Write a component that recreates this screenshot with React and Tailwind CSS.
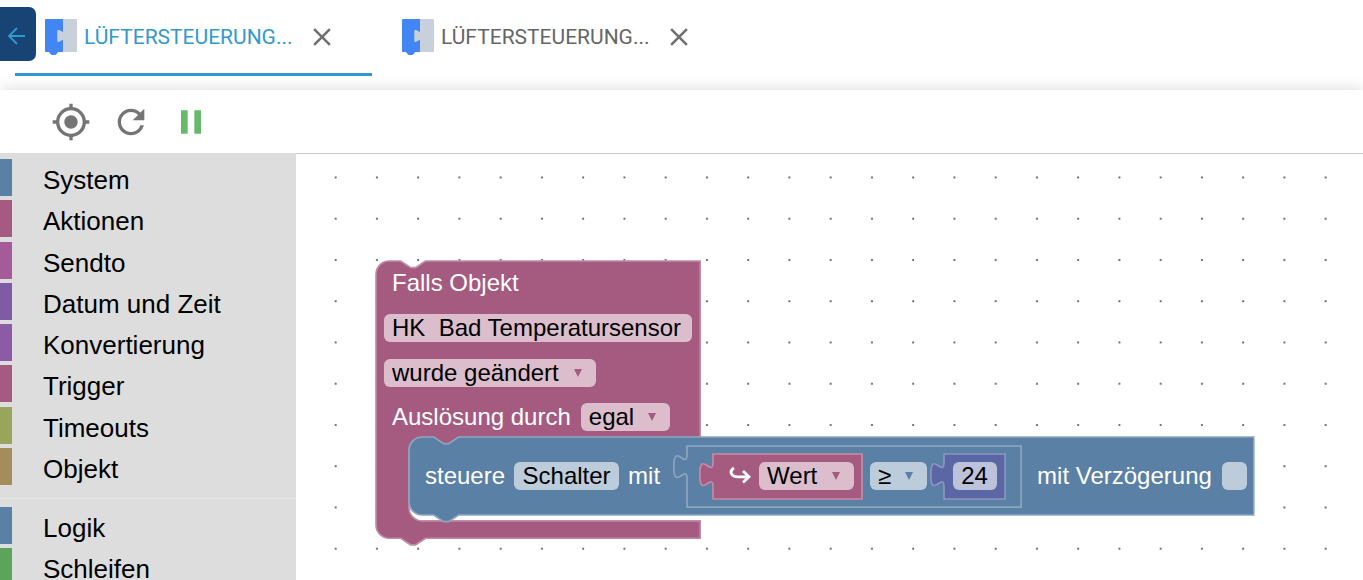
import { MdClose, MdMyLocation, MdPause, MdRefresh } from "react-icons/md";

const categories = [
  { name: "System", color: "bg-[#5b80a5]" },
  { name: "Aktionen", color: "bg-[#a55b80]" },
  { name: "Sendto", color: "bg-[#a55b99]" },
  { name: "Datum und Zeit", color: "bg-[#805ba5]" },
  { name: "Konvertierung", color: "bg-[#8c5ba5]" },
  { name: "Trigger", color: "bg-[#a55b80]" },
  { name: "Timeouts", color: "bg-[#99a55b]" },
  { name: "Objekt", color: "bg-[#a58c5b]" },
];

const basics = [
  { name: "Logik", color: "bg-[#5b80a5]" },
  { name: "Schleifen", color: "bg-[#5ba55b]" },
];

function BlocklyIcon() {
  return (
    <svg width="32" height="36" viewBox="0 0 32 36" className="shrink-0" aria-hidden="true">
      <path d="M11 8H17V0H31a1 1 0 0 1 1 1V32a1 1 0 0 1-1 1H17V25H11Z" fill="#c8d0dc" />
      <path
        d="M1 0H18V13L14 11.1Q12.3 10.5 12.3 12V22Q12.3 23.500 14 22.800L18 20.700V33H13.600Q12.800 33.300 11.800 34.800Q10.800 36 9.600 36H7.600Q6.300 36 5.300 34.800Q4.300 33.300 3.500 33H1a1 1 0 0 1-1-1V1a1 1 0 0 1 1-1Z"
        fill="#4285f4"
      />
    </svg>
  );
}

function Tab({ active }) {
  return (
    <div
      className={
        active
          ? "flex h-[76px] w-[357px] items-center border-b-[3px] border-[#3399cc] pl-[30px] text-[#3399cc]"
          : "flex h-[76px] w-[357px] items-center border-b-[3px] border-transparent pl-[30px] text-[#666666]"
      }
    >
      <button type="button" role="tab" aria-selected={active} className="flex items-center gap-[7px]">
        <BlocklyIcon />
        <span className="w-[209px] text-left font-[Roboto,sans-serif] text-[21px] leading-7 whitespace-nowrap">
          LÜFTERSTEUERUNG...
        </span>
      </button>
      <button type="button" aria-label="Tab schließen" className="ml-[14px] text-[#6f6f6f]">
        <MdClose size={30} />
      </button>
    </div>
  );
}

function Category({ name, color }) {
  return (
    <li className="flex-1">
      <button type="button" className="flex h-[41px] w-full gap-[31px] text-left">
        <span className={`h-[37px] w-3 shrink-0 ${color}`} />
        <span className="pt-[3px] text-[26px] leading-[37px]">{name}</span>
      </button>
    </li>
  );
}

function Outline({ d, fill, stroke }) {
  return (
    <svg className="absolute inset-0 size-full overflow-visible" aria-hidden="true">
      <path d={d} transform="scale(1.65)" fill={fill} stroke={stroke} strokeWidth="1" />
    </svg>
  );
}

function Dropdown({ label, value, width, field, arrow }) {
  return (
    <span className={`relative flex h-7 items-center ${width}`}>
      <select
        aria-label={label}
        defaultValue={value}
        className={`h-7 w-full appearance-none rounded-md pl-2 text-[24px] leading-7 text-black ${field}`}
      >
        <option>{value}</option>
      </select>
      <svg
        width="8"
        height="8"
        viewBox="0 0 8 8"
        className={`pointer-events-none absolute right-[14px] ${arrow}`}
        aria-hidden="true"
      >
        <path d="M0 0H8L4 8Z" fill="currentColor" />
      </svg>
    </span>
  );
}

const ROSE_FIELD = "bg-[#dbbdcc]";
const BLUE_FIELD = "bg-[#bdccdb]";

function TriggerBlock() {
  return (
    <div className="absolute top-[107px] left-[80px] h-[278px] w-[325px]">
      <Outline
        fill="#a55b80"
        stroke="#c08ca6"
        d="M0 8A8 8 0 0 1 8 0H15l6 4h3l6-4H196.500V107H50l-6 4h-3l-6-4h-7a8 8 0 0 0-8 8v34.500a8 8 0 0 0 8 8H196.500v10.500H30l-6 4h-3l-6-4H8a8 8 0 0 1-8-8Z"
      />
      <div className="relative flex flex-col pl-2">
        <div className="flex h-11 items-center pl-2">Falls Objekt</div>
        <div className="flex h-[45px] items-center">
          <button type="button" className={`h-7 w-[308px] rounded-md pl-2 text-left leading-7 whitespace-pre text-black ${ROSE_FIELD}`}>
            {"HK  Bad Temperatursensor"}
          </button>
        </div>
        <div className="flex h-[45px] items-center">
          <Dropdown label="Bedingung" value="wurde geändert" width="w-[212px]" field={ROSE_FIELD} arrow="text-[#a55b80]" />
        </div>
        <div className="flex h-11 items-center gap-[10px] pl-2">
          Auslösung durch
          <Dropdown label="Auslösung durch" value="egal" width="w-[89px]" field={ROSE_FIELD} arrow="text-[#a55b80]" />
        </div>
      </div>
    </div>
  );
}

function ValueBlock() {
  return (
    <div className="relative flex h-[45px] w-[149px] items-center gap-2 pl-4">
      <Outline
        fill="#a55b80"
        stroke="#c98ba3"
        d="M0 0H90.300V27.300H0V20C0 10-8 28-8 12.500S0 15 0 5Z"
      />
      <svg width="22" height="20" viewBox="0 0 22 20" className="relative" aria-hidden="true">
        <path
          d="M5 2C-.5 5.500 2.300 10.800 9 10.800H19.500M14 5L20 10.800L14 16.500"
          fill="none"
          stroke="#fff"
          strokeWidth="2.800"
        />
      </svg>
      <Dropdown label="Trigger-Wert" value="Wert" width="w-[95px]" field={ROSE_FIELD} arrow="text-[#a55b80]" />
    </div>
  );
}

function NumberBlock() {
  return (
    <div className="relative flex h-[45px] w-[61px] items-center justify-center">
      <Outline
        fill="#5b67a5"
        stroke="#8c95c0"
        d="M0 0H37V27.300H0V20C0 10-8 28-8 12.500S0 15 0 5Z"
      />
      <input
        aria-label="Vergleichswert"
        defaultValue="24"
        className="relative h-7 w-[44px] rounded-md bg-[#bdc2db] text-center text-[24px] leading-7 text-black"
      />
    </div>
  );
}

function CompareBlock() {
  return (
    <div className="relative ml-[18px] flex h-[61px] w-[334px] items-center pl-[26px]">
      <Outline
        fill="none"
        stroke="#8ca6c0"
        d="M0 0H202.500V37H0V20C0 10-8 28-8 12.500S0 15 0 5Z"
      />
      <ValueBlock />
      <div className="ml-2">
        <Dropdown label="Vergleich" value="≥" width="w-[57px]" field={BLUE_FIELD} arrow="text-[#5b80a5]" />
      </div>
      <div className="ml-[17px]">
        <NumberBlock />
      </div>
    </div>
  );
}

function ControlBlock() {
  return (
    <div className="absolute top-[283px] left-[113px] h-[78px] w-[845px]">
      <Outline
        fill="#5b80a5"
        stroke="#8ca6c0"
        d="M0 8A8 8 0 0 1 8 0H15l6 4h3l6-4H512V47.300H30l-6 4h-3l-6-4H8a8 8 0 0 1-8-8Z"
      />
      <div className="relative flex h-full items-center gap-[9px] pl-4 whitespace-nowrap">
        <span>steuere</span>
        <button type="button" className={`h-7 w-[105px] rounded-md text-center leading-7 text-black ${BLUE_FIELD}`}>
          Schalter
        </button>
        <span>mit</span>
        <CompareBlock />
        <label className="ml-[7px] flex items-center gap-[10px]">
          mit Verzögerung
          <input type="checkbox" className={`h-7 w-[25px] appearance-none rounded-md ${BLUE_FIELD}`} />
        </label>
      </div>
    </div>
  );
}

export default function App() {
  return (
    <div className="flex h-screen flex-col overflow-hidden bg-white font-['Liberation_Sans',Arial,sans-serif] text-black">
      <header className="flex h-[90px] shrink-0 items-start">
        <button
          type="button"
          aria-label="Zurück"
          className="mt-[7px] flex h-[54px] w-9 items-center rounded-r-[7px] bg-[#174475] pt-[3px] pl-2"
        >
          <svg width="17" height="18" viewBox="0 0 17 18" aria-hidden="true">
            <path d="M17 9H1M9 1L1 9L9 17" fill="none" stroke="#3399cc" strokeWidth="1.800" />
          </svg>
        </button>
        <div role="tablist" className="-ml-[21px] flex">
          <Tab active />
          <Tab active={false} />
        </div>
      </header>

      <div className="flex h-16 shrink-0 items-center gap-5 bg-white pl-[51px] text-[#757575] shadow-[0_-1px_14px_rgba(0,0,0,0.14)]">
        <button type="button" aria-label="Block lokalisieren">
          <MdMyLocation size={40} />
        </button>
        <button type="button" aria-label="Neu starten">
          <MdRefresh size={40} />
        </button>
        <button type="button" aria-label="Pause" className="text-[#66bb6a]">
          <MdPause size={40} />
        </button>
      </div>

      <main className="-mt-px flex min-h-0 flex-1">
        <nav aria-label="Kategorien" className="relative w-[296px] shrink-0 overflow-hidden bg-[#dddddd] pt-[6px]">
          <ul className="flex h-[330px] flex-col">
            {categories.map((c) => (
              <Category key={c.name} {...c} />
            ))}
          </ul>
          <hr className="mt-[9px] mb-2 border-t border-[#e5e5e5]" />
          <ul className="flex h-[82px] flex-col">
            {basics.map((c) => (
              <Category key={c.name} {...c} />
            ))}
          </ul>
        </nav>
        <section
          aria-label="Arbeitsfläche"
          className="relative min-w-0 flex-1 overflow-hidden border-t border-[#c9c9c9] bg-white text-[24px] leading-7 text-white"
        >
          <svg className="absolute inset-0 size-full" aria-hidden="true">
            <defs>
              <pattern id="grid" width="41.25" height="41.25" x="19" y="2.800" patternUnits="userSpaceOnUse">
                <rect x="19.800" y="19.800" width="1.800" height="1.800" fill="#555" />
              </pattern>
            </defs>
            <rect width="100%" height="100%" fill="url(#grid)" />
          </svg>
          <TriggerBlock />
          <ControlBlock />
        </section>
      </main>
    </div>
  );
}
